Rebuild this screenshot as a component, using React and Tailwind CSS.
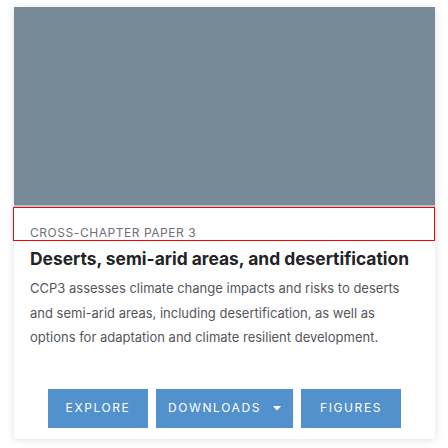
export default function App() {
  return (
    <div className="min-h-[448px] bg-white px-[14px] pt-[7px] font-['Inter',sans-serif]">
      <div className="w-[421px] bg-white shadow-[0_1px_8px_rgba(0,0,0,0.12)] rounded-b-[3px] pb-[11px]">
        <div className="h-[198px] bg-[#768b97]" />
        <div className="h-[2px] bg-[#a9c8da]" />
        <div className="-ml-px h-[34px] border border-[#ff0000] pl-[16px] pt-[18px]">
          <div className="text-[12px] leading-[14px] tracking-[0.55px] uppercase text-[#6e6f78]">Cross-Chapter Paper 3</div>
        </div>
        <div className="px-[16px]">
          <h2 className="mt-[6px] text-[17.4px] leading-[24px] font-bold text-[#222428]">
            Deserts, semi-arid areas, and desertification
          </h2>
          <p className="mt-[5px] text-[13px] leading-[24.5px] text-[#55565c]">
            CCP3 assesses climate change impacts and risks to deserts and semi-arid areas, including desertification, as well as options for adaptation and climate resilient development.
          </p>
        </div>
        <div className="mt-[39px] flex justify-center gap-[8px]">
          <button className="h-[39px] w-[100px] bg-[#5291cc] text-[12px] tracking-[1.6px] text-white">EXPLORE</button>
          <button className="h-[39px] w-[137px] bg-[#5291cc] text-[12px] tracking-[1.6px] text-white flex items-center justify-center gap-[12px]">
            DOWNLOADS
            <svg width="8" height="5" viewBox="0 0 8 5"><path d="M0 0h8L4 4.5z" fill="#fff" /></svg>
          </button>
          <button className="h-[39px] w-[100px] bg-[#5291cc] text-[12px] tracking-[1.6px] text-white">FIGURES</button>
        </div>
      </div>
    </div>
  );
}
